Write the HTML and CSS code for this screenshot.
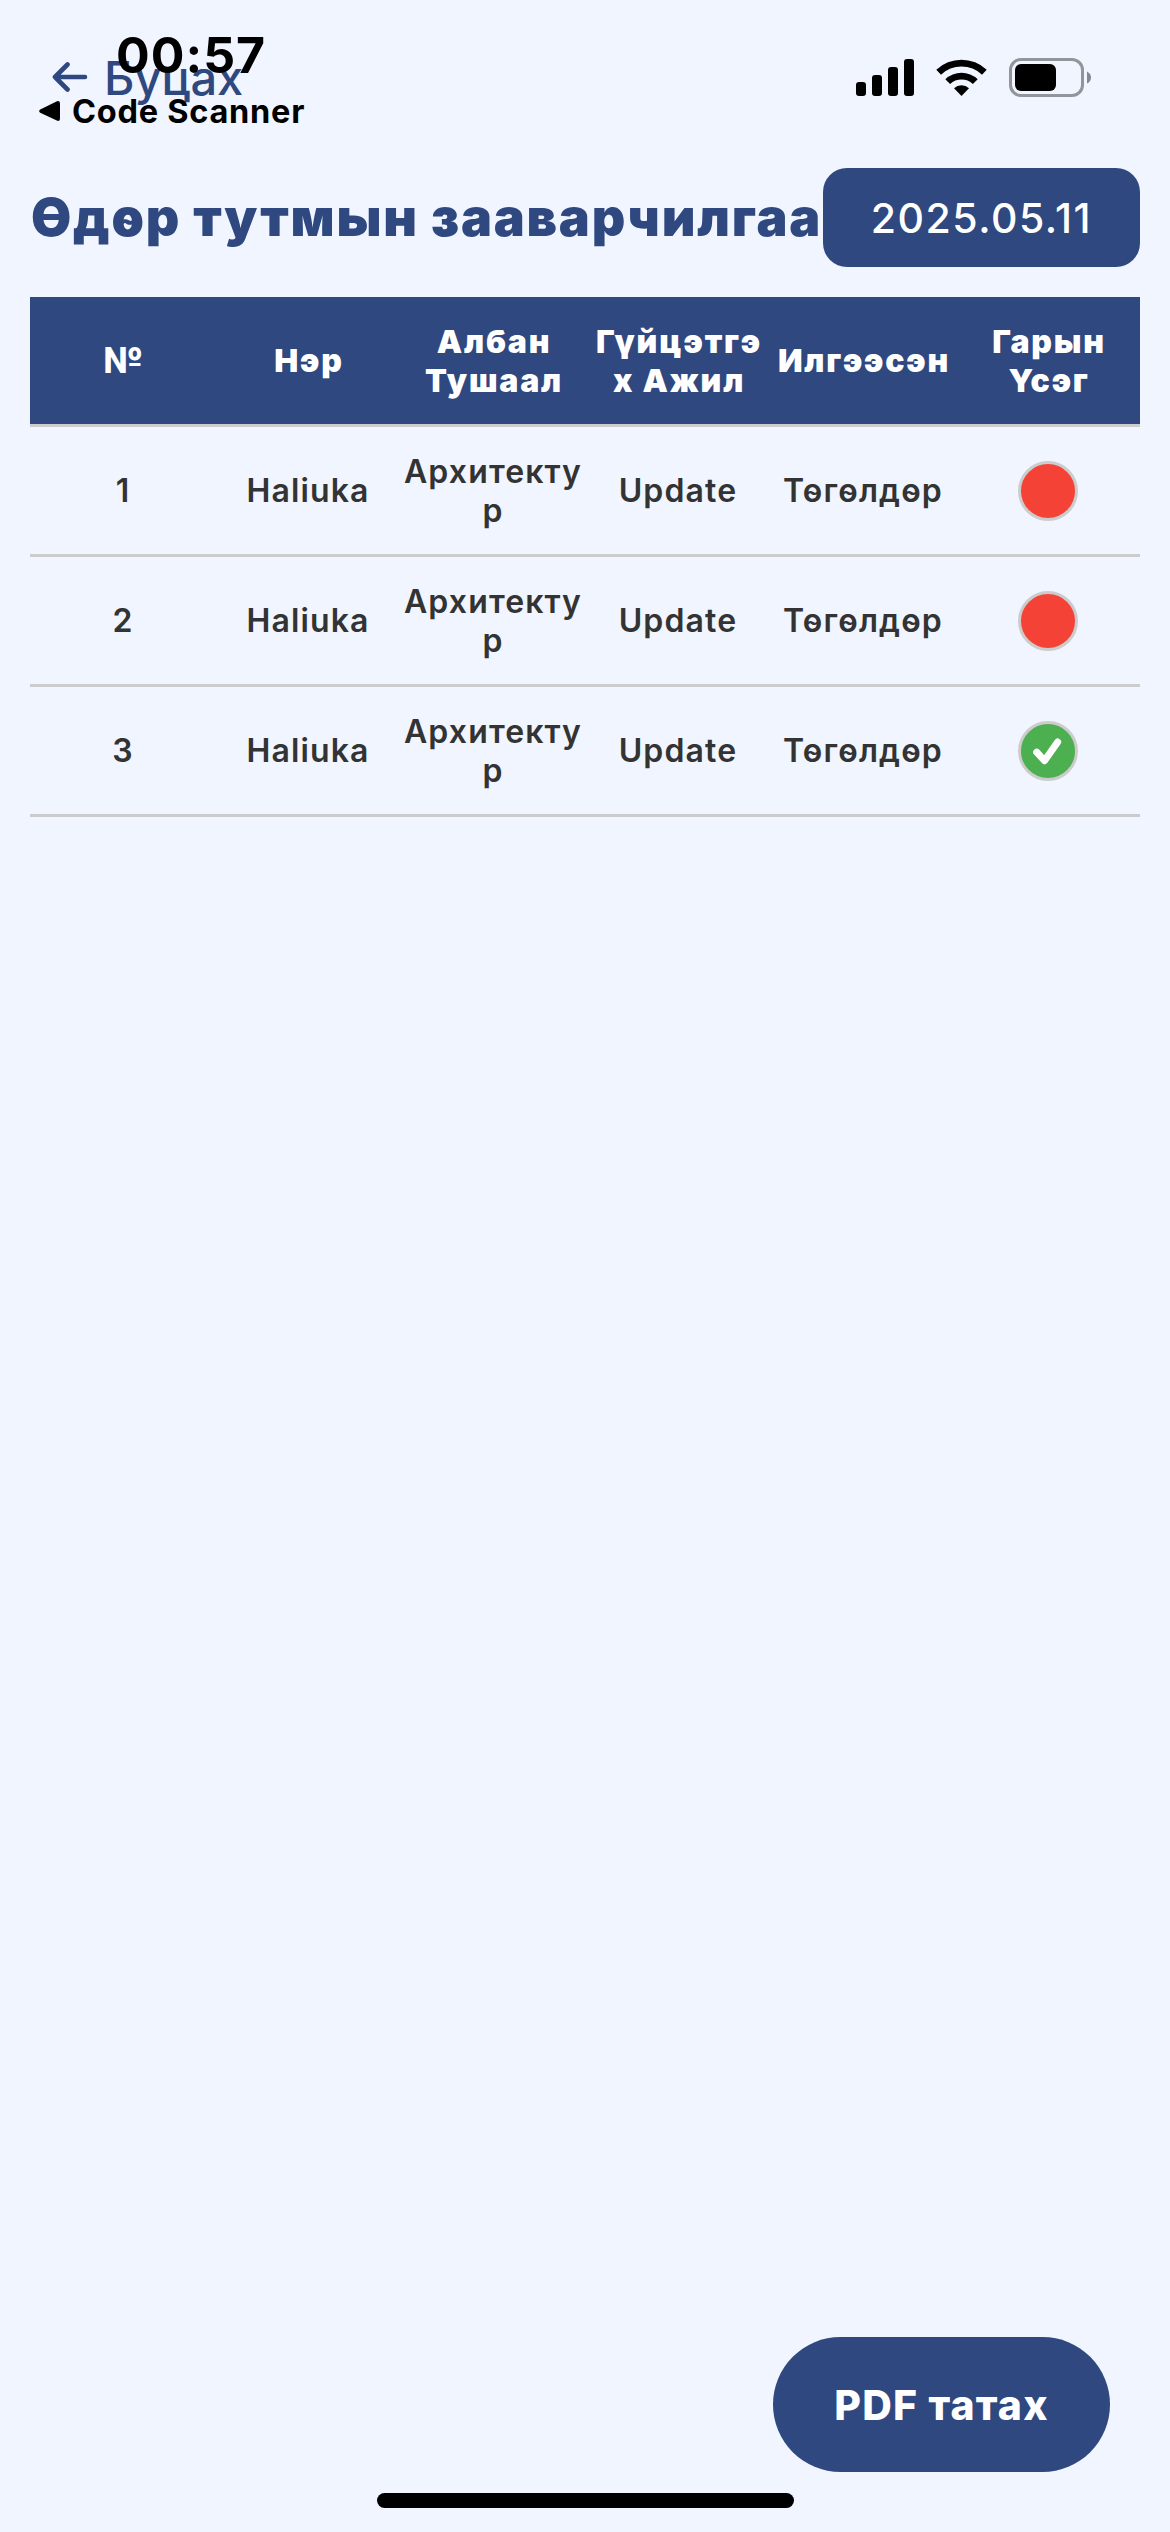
FILE: index.html
```html
<!DOCTYPE html>
<html lang="mn">
<head>
<meta charset="utf-8">
<title>Өдөр тутмын зааварчилгаа</title>
<link rel="stylesheet" href="styles.css">
</head>
<body>
<div class="screen">
  <header class="nav">
    <a class="back">
      <svg class="back-icon" width="36" height="30" viewBox="0 0 36 30"><path d="M33 15H3M15.500 2.500L3 15l12.500 12.500"/></svg>
      <span>Буцах</span>
    </a>
  </header>

  <main class="content">
    <div class="title-row">
      <h1 class="title">Өдөр тутмын зааварчилгаа</h1>
      <button class="date">2025.05.11</button>
    </div>

    <div class="table">
      <div class="row head">
        <div class="cell numero">№</div>
        <div class="cell">Нэр</div>
        <div class="cell">Албан<br>Тушаал</div>
        <div class="cell">Гүйцэтгэ<br>х Ажил</div>
        <div class="cell">Илгээсэн</div>
        <div class="cell">Гарын<br>Үсэг</div>
      </div>
      <div class="row">
        <div class="cell">1</div>
        <div class="cell">Haliuka</div>
        <div class="cell">Архитекту<br>р</div>
        <div class="cell">Update</div>
        <div class="cell">Төгөлдөр</div>
        <div class="cell"><span class="status pending"></span></div>
      </div>
      <div class="row">
        <div class="cell">2</div>
        <div class="cell">Haliuka</div>
        <div class="cell">Архитекту<br>р</div>
        <div class="cell">Update</div>
        <div class="cell">Төгөлдөр</div>
        <div class="cell"><span class="status pending"></span></div>
      </div>
      <div class="row">
        <div class="cell">3</div>
        <div class="cell">Haliuka</div>
        <div class="cell">Архитекту<br>р</div>
        <div class="cell">Update</div>
        <div class="cell">Төгөлдөр</div>
        <div class="cell"><span class="status signed"><svg width="54" height="54" viewBox="0 0 54 54"><path d="M15.700 28.200L23.500 36.700L36.700 18"/></svg></span></div>
      </div>
    </div>
  </main>

  <footer class="footer">
    <button class="pdf">PDF татах</button>
  </footer>

  <div class="status-bar">
    <div class="status-left">
      <div class="time">00:57</div>
      <div class="return-app">
        <svg width="22" height="22" viewBox="0 0 22 22"><path d="M1.200 9.500L18 1.200Q21 .2 21 3.500V18Q21 21.800 17.800 20.600L1.200 12.800Q-.8 11.200 1.200 9.500Z"/></svg>
        <span>Code Scanner</span>
      </div>
    </div>
    <svg class="indicators" width="236" height="40" viewBox="0 0 236 40">
      <rect x="0" y="24" width="10" height="14" rx="3"/>
      <rect x="16" y="17" width="10" height="21" rx="3"/>
      <rect x="32" y="9" width="10" height="29" rx="3"/>
      <rect x="48" y="1" width="10" height="37" rx="3"/>
      <path d="M80.300 11.800A36.500 36.500 0 0 1 130.700 11.800L126 16.700A29.500 29.500 0 0 0 85 16.700Z"/>
      <path d="M89.300 21.200A23.700 23.700 0 0 1 121.700 21.200L116.900 25.900A16.700 16.700 0 0 0 94.100 25.900Z"/>
      <path d="M98 30.300A11 11 0 0 1 113 30.300L105.500 38Z"/>
      <rect class="battery-shell" x="154.500" y="1.500" width="72" height="36" rx="10.500"/>
      <rect x="159" y="6" width="41" height="27" rx="6"/>
      <path class="battery-cap" d="M231 13.500Q235 15.500 235 19.500T231 25.500Z"/>
    </svg>
  </div>
  <div class="home-indicator"></div>
</div>
</body>
</html>
```
FILE: styles.css
```css
* {
  box-sizing: border-box;
}

body {
  margin: 0;
  background: #f0f5ff;
  color: #333;
  font-family: Inter, "Liberation Sans", sans-serif;
}

button {
  border: 0;
  padding: 0;
  font-family: inherit;
  color: #fff;
  background: #2f487f;
}

.screen {
  position: relative;
  display: flex;
  flex-direction: column;
  width: 1170px;
  height: 2532px;
  overflow: hidden;
}

.nav {
  display: flex;
  height: 168px;
  padding: 47px 52px 0;
}

.back {
  display: flex;
  align-items: center;
  gap: 16px;
  height: 60px;
  color: #2f487f;
  font-size: 47px;
  font-weight: 500;
}

.back-icon {
  fill: none;
  stroke: currentColor;
  stroke-width: 4.6;
  stroke-linecap: round;
  stroke-linejoin: round;
}

.content {
  flex: 1;
  padding: 0 30px;
}

.title-row {
  display: flex;
  align-items: center;
  justify-content: space-between;
  height: 99px;
  margin-bottom: 30px;
}

.title {
  margin: 0;
  padding-left: 1px;
  color: #2f487f;
  font-size: 52px;
  font-weight: 900;
  letter-spacing: 1.8px;
  white-space: nowrap;
}

.date {
  flex: none;
  width: 317px;
  height: 99px;
  border-radius: 24px;
  font-size: 41px;
  font-weight: 500;
  letter-spacing: 1.5px;
}

.row {
  display: grid;
  grid-template-columns: repeat(6, 1fr);
  align-items: center;
  height: 130px;
  border-bottom: 3px solid #ccc;
  font-size: 32px;
  font-weight: 600;
  line-height: 39px;
  letter-spacing: 1.15px;
}

.head {
  background: #2f487f;
  color: #fff;
  font-weight: 900;
  letter-spacing: 1.8px;
}

.cell {
  padding-left: 1px;
  text-align: center;
  white-space: nowrap;
}

.head .cell {
  padding-left: 3px;
}

.numero {
  font-size: 35px;
}

.status {
  display: block;
  width: 60px;
  height: 60px;
  margin: 0 auto;
  border: 3px solid #ccc;
  border-radius: 50%;
}

.pending {
  background: #f44336;
}

.signed {
  background: #4caf50;
}

.signed svg {
  display: block;
  fill: none;
  stroke: #fff;
  stroke-width: 7;
  stroke-linecap: round;
  stroke-linejoin: round;
}

.footer {
  display: flex;
  justify-content: flex-end;
  padding: 0 60px 60px;
}

.pdf {
  width: 337px;
  height: 135px;
  border-radius: 68px;
  font-size: 41px;
  font-weight: 800;
  letter-spacing: 1.2px;
}

.status-bar {
  position: absolute;
  inset: 0 0 auto;
  display: flex;
  justify-content: space-between;
  padding: 25px 78px 0 39px;
}

.status-left {
  color: #000;
}

.time {
  padding-left: 77px;
  font-size: 50px;
  font-weight: 750;
  line-height: 60px;
  letter-spacing: 1px;
}

.return-app {
  display: flex;
  align-items: center;
  gap: 11px;
  height: 40px;
  margin-top: 6px;
  font-size: 32.5px;
  font-weight: 650;
  letter-spacing: .75px;
}

.indicators {
  margin-top: 33px;
}

.battery-shell {
  fill: none;
  stroke: #929599;
  stroke-width: 3;
}

.battery-cap {
  fill: #85888c;
}

.home-indicator {
  position: absolute;
  left: 377px;
  bottom: 24px;
  width: 417px;
  height: 15px;
  border-radius: 8px;
  background: #000;
}
```
